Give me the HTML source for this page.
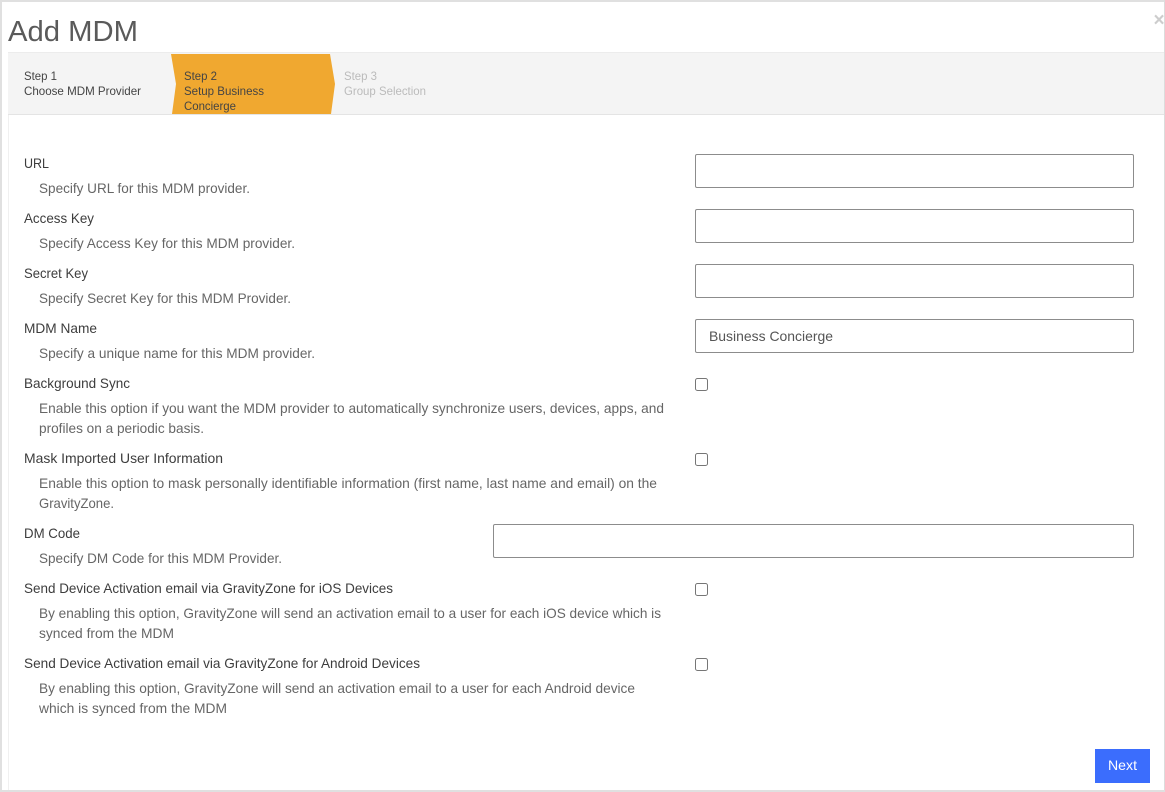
<!DOCTYPE html>
<html><head><meta charset="utf-8"><title>Add MDM</title>
<style>
html,body{margin:0;padding:0;background:#fff}
svg{display:block}
text{font-family:"Liberation Sans",sans-serif;font-size:14px;fill:#3d3d3d}
.d{fill:#666}
.s{font-size:12px;fill:#444}
.g{fill:#bbb}
</style></head><body>
<svg width="1165" height="792" viewBox="0 0 1165 792" xmlns="http://www.w3.org/2000/svg">
<rect width="1165" height="792" fill="#fff"/>
<rect x="8" y="115" width="1" height="675" fill="#f0f0f0"/>
<rect x="0" y="0" width="1165" height="2" fill="#e0e0e0"/>
<rect x="0" y="0" width="2" height="792" fill="#e0e0e0"/>
<rect x="1164" y="0" width="1" height="792" fill="#dcdcdc"/>
<rect x="0" y="790" width="1165" height="2" fill="#e0e0e0"/>

<text x="8" y="41" style="font-size:29px;fill:#5a5a5a" textLength="130" lengthAdjust="spacingAndGlyphs">Add MDM</text>
<text x="1153.5" y="26" style="font-size:19px;font-weight:bold;fill:#cdcdcd">×</text>

<rect x="8" y="53" width="1156" height="62" fill="#f4f4f4"/>
<rect x="8" y="52" width="1156" height="1" fill="#ececec"/>
<rect x="8" y="114" width="1156" height="1" fill="#e4e4e4"/>
<polygon points="171,54 330,54 335,84 331,114 172,114 176,84" fill="#f0a830"/>

<text class="s" x="24" y="80" textLength="33" lengthAdjust="spacingAndGlyphs">Step 1</text>
<text class="s" x="24" y="95" textLength="117" lengthAdjust="spacingAndGlyphs">Choose MDM Provider</text>
<text class="s" x="184" y="80" textLength="33" lengthAdjust="spacingAndGlyphs">Step 2</text>
<text class="s" x="184" y="95" textLength="80" lengthAdjust="spacingAndGlyphs">Setup Business</text>
<text class="s" x="184" y="110" textLength="52" lengthAdjust="spacingAndGlyphs">Concierge</text>
<text class="s g" x="344" y="80" textLength="33" lengthAdjust="spacingAndGlyphs">Step 3</text>
<text class="s g" x="344" y="95" textLength="82" lengthAdjust="spacingAndGlyphs">Group Selection</text>

<text x="24" y="168" textLength="25" lengthAdjust="spacingAndGlyphs">URL</text>
<text class="d" x="39" y="193" textLength="211" lengthAdjust="spacingAndGlyphs">Specify URL for this MDM provider.</text>
<text x="24" y="223" textLength="70" lengthAdjust="spacingAndGlyphs">Access Key</text>
<text class="d" x="39" y="248" textLength="256" lengthAdjust="spacingAndGlyphs">Specify Access Key for this MDM provider.</text>
<text x="24" y="278" textLength="64" lengthAdjust="spacingAndGlyphs">Secret Key</text>
<text class="d" x="39" y="303" textLength="252" lengthAdjust="spacingAndGlyphs">Specify Secret Key for this MDM Provider.</text>
<text x="24" y="333" textLength="73" lengthAdjust="spacingAndGlyphs">MDM Name</text>
<text class="d" x="39" y="358" textLength="276" lengthAdjust="spacingAndGlyphs">Specify a unique name for this MDM provider.</text>
<text x="24" y="388" textLength="106" lengthAdjust="spacingAndGlyphs">Background Sync</text>
<text class="d" x="39" y="413" textLength="625" lengthAdjust="spacingAndGlyphs">Enable this option if you want the MDM provider to automatically synchronize users, devices, apps, and</text>
<text class="d" x="39" y="433" textLength="165" lengthAdjust="spacingAndGlyphs">profiles on a periodic basis.</text>
<text x="24" y="463" textLength="199" lengthAdjust="spacingAndGlyphs">Mask Imported User Information</text>
<text class="d" x="39" y="488" textLength="618" lengthAdjust="spacingAndGlyphs">Enable this option to mask personally identifiable information (first name, last name and email) on the</text>
<text class="d" x="39" y="508" textLength="75" lengthAdjust="spacingAndGlyphs">GravityZone.</text>
<text x="24" y="538" textLength="56" lengthAdjust="spacingAndGlyphs">DM Code</text>
<text class="d" x="39" y="563" textLength="243" lengthAdjust="spacingAndGlyphs">Specify DM Code for this MDM Provider.</text>
<text x="24" y="593" textLength="369" lengthAdjust="spacingAndGlyphs">Send Device Activation email via GravityZone for iOS Devices</text>
<text class="d" x="39" y="618" textLength="622" lengthAdjust="spacingAndGlyphs">By enabling this option, GravityZone will send an activation email to a user for each iOS device which is</text>
<text class="d" x="39" y="638" textLength="135" lengthAdjust="spacingAndGlyphs">synced from the MDM</text>
<text x="24" y="668" textLength="396" lengthAdjust="spacingAndGlyphs">Send Device Activation email via GravityZone for Android Devices</text>
<text class="d" x="39" y="693" textLength="596" lengthAdjust="spacingAndGlyphs">By enabling this option, GravityZone will send an activation email to a user for each Android device</text>
<text class="d" x="39" y="713" textLength="188" lengthAdjust="spacingAndGlyphs">which is synced from the MDM</text>

<g fill="#fff" stroke="#8c8c8c" stroke-width="1">
<rect x="695.5" y="154.5" width="438" height="33" rx="1.5"/>
<rect x="695.5" y="209.5" width="438" height="33" rx="1.5"/>
<rect x="695.5" y="264.5" width="438" height="33" rx="1.5"/>
<rect x="695.5" y="319.5" width="438" height="33" rx="1.5"/>
<rect x="493.5" y="524.5" width="640" height="33" rx="1.5"/>
<rect x="695.5" y="378.5" width="12" height="12" rx="2" stroke="#767676"/>
<rect x="695.5" y="453.5" width="12" height="12" rx="2" stroke="#767676"/>
<rect x="695.5" y="583.5" width="12" height="12" rx="2" stroke="#767676"/>
<rect x="695.5" y="658.5" width="12" height="12" rx="2" stroke="#767676"/>
</g>
<text x="709" y="341" style="fill:#555" textLength="124" lengthAdjust="spacingAndGlyphs">Business Concierge</text>

<rect x="1095" y="749" width="55" height="34" fill="#3b6dfd"/>
<text x="1108" y="770" style="fill:#fff" textLength="29" lengthAdjust="spacingAndGlyphs">Next</text>
</svg>
</body></html>
